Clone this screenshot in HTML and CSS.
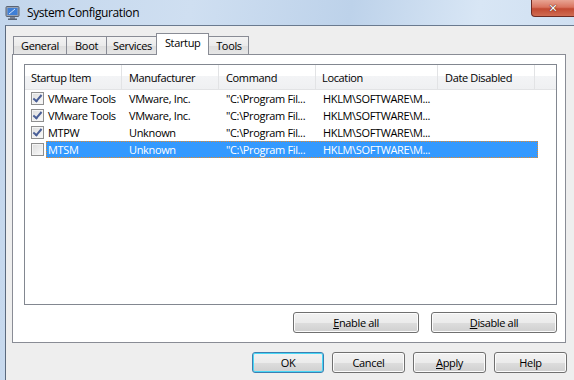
FILE: index.html
```html
<!DOCTYPE html>
<html>
<head>
  <title>System Configuration</title>
  <link rel="stylesheet" href="styles.css">
</head>
<body>
  <div class="window">
    <div class="titlebar">
      <svg class="app-icon" width="16" height="16" viewBox="0 0 16 16">
        <rect x="1" y="1.5" width="13" height="10" rx="1" fill="#9aa4b4" stroke="#5a6475" stroke-width="1"/>
        <rect x="2.5" y="3" width="10" height="7" fill="#3f7fd6"/>
        <path d="M4 9 L10 4" stroke="#cfe4ff" stroke-width="1"/>
        <rect x="5" y="12" width="5" height="2" fill="#7d8696"/>
        <rect x="3" y="13.5" width="9" height="1.5" fill="#5a6475"/>
      </svg>
      <span class="title">System Configuration</span>
      <div class="close-btn"><span>&#x2715;</span></div>
    </div>

    <div class="client">
      <div class="tabs">
        <div class="tab general">General</div>
        <div class="tab">Boot</div>
        <div class="tab">Services</div>
        <div class="tab active">Startup</div>
        <div class="tab">Tools</div>
      </div>

      <div class="panel">
        <div class="listview">
          <div class="lv-header">
            <div class="col c1">Startup Item</div>
            <div class="col c2">Manufacturer</div>
            <div class="col c3">Command</div>
            <div class="col c4">Location</div>
            <div class="col c5">Date Disabled</div>
            <div class="col cfill"></div>
          </div>

          <div class="lv-row">
            <span class="chk checked"></span>
            <div class="cells">
              <span>VMware Tools</span>
              <span>VMware, Inc.</span>
              <span>"C:\Program Fil...</span>
              <span>HKLM\SOFTWARE\M...</span>
              <span></span>
            </div>
          </div>
          <div class="lv-row">
            <span class="chk checked"></span>
            <div class="cells">
              <span>VMware Tools</span>
              <span>VMware, Inc.</span>
              <span>"C:\Program Fil...</span>
              <span>HKLM\SOFTWARE\M...</span>
              <span></span>
            </div>
          </div>
          <div class="lv-row">
            <span class="chk checked"></span>
            <div class="cells">
              <span>MTPW</span>
              <span>Unknown</span>
              <span>"C:\Program Fil...</span>
              <span>HKLM\SOFTWARE\M...</span>
              <span></span>
            </div>
          </div>
          <div class="lv-row selected">
            <span class="chk"></span>
            <div class="cells">
              <span>MTSM</span>
              <span>Unknown</span>
              <span>"C:\Program Fil...</span>
              <span>HKLM\SOFTWARE\M...</span>
              <span></span>
            </div>
          </div>
        </div>

        <div class="panel-buttons">
          <button class="btn wide"><u>E</u>nable all</button>
          <button class="btn wide"><u>D</u>isable all</button>
        </div>
      </div>

      <div class="dialog-buttons">
        <button class="btn default">OK</button>
        <button class="btn">Cancel</button>
        <button class="btn"><u>A</u>pply</button>
        <button class="btn">Help</button>
      </div>
    </div>
  </div>
</body>
</html>
```

FILE: styles.css
```css
body {
  margin: 0;
  width: 574px;
  height: 380px;
  overflow: hidden;
  font-family: "Open Sans", "Noto Sans", sans-serif;
  font-size: 11px;
  letter-spacing: -0.35px;
  color: #000;
  background: #c9dbef;
}

.window {
  height: 380px;
  background: linear-gradient(100deg, #c3d6ec 0%, #cfdff1 30%, #bdd2ea 55%, #d8e6f5 75%, #cbdcef 100%);
}

.titlebar {
  display: flex;
  align-items: flex-start;
  height: 25px;
}

.app-icon {
  margin: 5px 0 0 5px;
}

.title {
  margin: 4px 0 0 6px;
  font-size: 12px;
  letter-spacing: -0.4px;
  color: #000;
}

.close-btn {
  margin-left: auto;
  width: 44px;
  height: 17px;
  margin-right: -1px;
  box-sizing: border-box;
  border: 1px solid #6d2b23;
  border-top: none;
  border-radius: 0 0 0 4px;
  background: linear-gradient(#e8a493 0%, #d9745f 45%, #c24a32 55%, #d06c52 100%);
  text-align: center;
  line-height: 15px;
}

.close-btn span {
  color: #fff;
  font-family: "DejaVu Sans", sans-serif;
  font-weight: bold;
  font-size: 11px;
  text-shadow: 0 0 1px #4a1a12, 0 0 1px #4a1a12;
}

.client {
  margin-left: 5px;
  height: 355px;
  border-left: 1px solid #5b6a7e;
  border-top: 1px solid #6a7a8f;
  background: #eeeeee;
}

.tabs {
  display: flex;
  align-items: flex-end;
  height: 28px;
  margin-left: 7px;
}

.tab {
  box-sizing: border-box;
  min-width: 41px;
  height: 18px;
  padding: 0 6px;
  border: 1px solid #898c95;
  border-bottom: none;
  margin-right: -1px;
  background: linear-gradient(#f3f3f3, #ebebeb 50%, #dedede 51%, #e6e6e6);
  line-height: 18px;
  text-align: center;
}

.tab.general {
  padding: 0 7px;
}

.tab.active {
  position: relative;
  z-index: 1;
  height: 22px;
  margin: 0 -1px -1px -2px;
  padding: 0 8px;
  background: #fff;
  line-height: 18px;
}

.panel {
  width: 552px;
  height: 287px;
  margin-left: 6px;
  border: 1px solid #898c95;
  background: #fff;
}

.listview {
  width: 531px;
  height: 239px;
  margin: 9px 0 0 11px;
  border: 1px solid #828790;
  background: #fff;
}

.lv-header {
  display: grid;
  grid-template-columns: 97px 97px 97px 122px 97px 1fr;
  height: 24px;
  background: linear-gradient(#fff 0%, #fff 45%, #f3f4f6 46%, #eff0f2 100%);
  border-bottom: 1px solid #e2e3e5;
}

.col {
  padding: 2px 0 0 6px;
  line-height: 22px;
  border-right: 1px solid #e2e3e5;
}

.col.c2, .col.c3, .col.c5 {
  padding-left: 7px;
}

.col.cfill {
  border-right: none;
}

.lv-row {
  display: flex;
  height: 17px;
  line-height: 17px;
}

.chk {
  flex: none;
  width: 11px;
  height: 11px;
  margin: 2px 2px 0 6px;
  border: 1px solid #8f8f8f;
  background: linear-gradient(135deg, #dcdcdc, #fbfbfb);
  box-shadow: inset 0 0 0 1px #f4f4f4;
  position: relative;
}

.chk.checked::after {
  content: "";
  position: absolute;
  left: 3px;
  top: 0px;
  width: 3px;
  height: 7px;
  border: solid #4a5f97;
  border-width: 0 2px 2px 0;
  transform: rotate(40deg);
}

.cells {
  display: grid;
  grid-template-columns: 76px 97px 97px 122px 98px;
  box-sizing: border-box;
  height: 17px;
  border: 1px dotted transparent;
}

.cells span {
  padding-left: 6px;
  white-space: nowrap;
  overflow: hidden;
  line-height: 15px;
}

.cells span:first-child {
  padding-left: 1px;
}

.lv-row.selected .cells {
  background: #3399ff;
  color: #fff;
  border-color: #e08a30;
}

.panel-buttons {
  display: flex;
  justify-content: flex-end;
  gap: 12px;
  width: 544px;
  margin-top: 7px;
}

.btn {
  width: 73px;
  height: 21px;
  padding: 0;
  font-family: inherit;
  font-size: 11px;
  letter-spacing: -0.35px;
  color: #000;
  border: 1px solid #707070;
  border-radius: 3px;
  background: linear-gradient(#f2f2f2 0%, #ebebeb 50%, #dddddd 51%, #cfcfcf 100%);
  box-shadow: inset 0 0 0 1px #fcfcfc;
}

.btn.wide {
  width: 126px;
}

.btn.default {
  border-color: #3c7fb1;
  box-shadow: inset 0 0 0 1px #48d7f6;
  width: 72px;
}

.dialog-buttons {
  display: flex;
  justify-content: flex-end;
  gap: 8px;
  width: 561px;
  margin-top: 9px;
}
```
